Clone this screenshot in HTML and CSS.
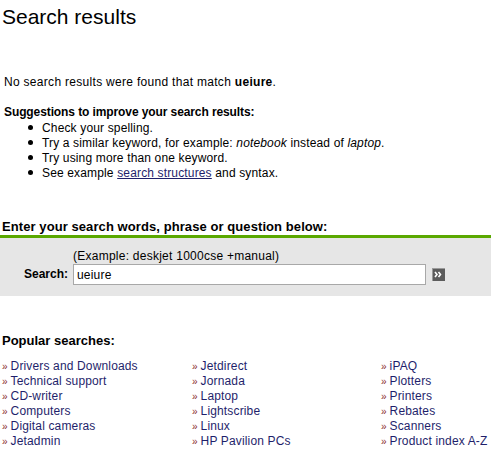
FILE: index.html
```html
<!DOCTYPE html>
<html>
<head>
<meta charset="utf-8">
<link rel="stylesheet" href="styles.css">
</head>
<body>
<h1 class="title">Search results</h1>
<p class="noresults">No search results were found that match <b>ueiure</b>.</p>
<p class="sugg-head">Suggestions to improve your search results:</p>
<ul class="sugg">
  <li>Check your spelling.</li>
  <li>Try a similar keyword, for example: <i>notebook</i> instead of <i>laptop</i>.</li>
  <li>Try using more than one keyword.</li>
  <li>See example <a href="#" class="inline-link">search structures</a> and syntax.</li>
</ul>
<h2 class="enter-head">Enter your search words, phrase or question below:</h2>
<div class="searchbox">
  <div class="sb-grid">
    <span></span>
    <span class="example">(Example: deskjet 1000cse +manual)</span>
    <label class="sb-label" for="q">Search:</label>
    <div class="sb-field">
      <input id="q" class="sb-input" type="text" value="ueiure">
      <button class="sb-btn" type="button" aria-label="Search">
        <svg width="13" height="13" viewBox="0 0 13 13">
          <rect x="0" y="0" width="13" height="13" fill="#5c5c5c"/>
          <path d="M0 0H13V1H1V13H0Z" fill="#9a9a9a"/>
          <path d="M3 4L5 6.5L3 9M6.5 4L8.5 6.5L6.5 9" stroke="#fff" stroke-width="1.6" fill="none"/>
        </svg>
      </button>
    </div>
  </div>
</div>
<h2 class="popular-head">Popular searches:</h2>
<div class="popular">
  <ul class="pcol">
    <li><a href="#">Drivers and Downloads</a></li>
    <li><a href="#">Technical support</a></li>
    <li><a href="#">CD-writer</a></li>
    <li><a href="#">Computers</a></li>
    <li><a href="#">Digital cameras</a></li>
    <li><a href="#">Jetadmin</a></li>
  </ul>
  <ul class="pcol">
    <li><a href="#">Jetdirect</a></li>
    <li><a href="#">Jornada</a></li>
    <li><a href="#">Laptop</a></li>
    <li><a href="#">Lightscribe</a></li>
    <li><a href="#">Linux</a></li>
    <li><a href="#">HP Pavilion PCs</a></li>
  </ul>
  <ul class="pcol">
    <li><a href="#">iPAQ</a></li>
    <li><a href="#">Plotters</a></li>
    <li><a href="#">Printers</a></li>
    <li><a href="#">Rebates</a></li>
    <li><a href="#">Scanners</a></li>
    <li><a href="#">Product index A-Z</a></li>
  </ul>
</div>
</body>
</html>
```
FILE: styles.css
```css
html, body {
  margin: 0;
  padding: 0;
  background: #fff;
}
body {
  font-family: "Liberation Sans", Arial, sans-serif;
  font-size: 12px;
  line-height: 15px;
  letter-spacing: 0.15px;
  color: #000;
}
b {
  letter-spacing: 0;
}
.title {
  margin: 5px 0 0 2px;
  font-size: 21px;
  line-height: 24px;
  font-weight: normal;
  letter-spacing: 0;
}
.noresults {
  margin: 46px 0 0 4px;
  letter-spacing: 0.3px;
}
.noresults b {
  letter-spacing: 0.3px;
}
.sugg-head {
  margin: 15px 0 0 4px;
  font-weight: bold;
  letter-spacing: -0.1px;
}
.sugg {
  margin: 1px 0 0 4px;
  padding-left: 38px;
  list-style: none;
}
.sugg li::before {
  content: "";
  display: inline-block;
  width: 5px;
  height: 5px;
  border-radius: 50%;
  background: #000;
  margin-left: -14px;
  margin-right: 9px;
  vertical-align: 2px;
}
.inline-link {
  color: #1f1f6b;
  text-decoration: underline;
}
.enter-head {
  margin: 38px 0 0 2px;
  font-size: 13px;
  line-height: 15px;
  font-weight: bold;
  letter-spacing: 0.08px;
}
.searchbox {
  margin-top: 1px;
  border-top: 3px solid #5aa800;
  background: #e6e6e6;
  padding: 11px 0 11px;
}
.sb-grid {
  display: grid;
  grid-template-columns: 73px auto;
  align-items: center;
}
.example {
  line-height: 15px;
  letter-spacing: 0.25px;
}
.sb-label {
  font-weight: bold;
  text-align: right;
  padding-right: 5px;
  letter-spacing: 0;
}
.sb-field {
  display: flex;
  align-items: center;
}
.sb-input {
  box-sizing: border-box;
  width: 353px;
  height: 21px;
  margin: 0;
  border: 1px solid #a8a8a8;
  padding: 0 2px 0 3px;
  font-family: "Liberation Sans", Arial, sans-serif;
  font-size: 12px;
  letter-spacing: 0.2px;
  color: #000;
  background: #fff;
}
.sb-btn {
  margin: 0 0 0 6px;
  padding: 0;
  border: 0;
  background: none;
  width: 13px;
  height: 13px;
  display: block;
}
.sb-btn svg {
  display: block;
}
.popular-head {
  margin: 37px 0 0 2px;
  font-size: 13px;
  line-height: 15px;
  font-weight: bold;
  letter-spacing: 0;
}
.popular {
  margin: 11px 0 0 2px;
  display: grid;
  grid-template-columns: 190px 189px auto;
}
.pcol {
  margin: 0;
  padding: 0;
  list-style: none;
}
.pcol li::before {
  content: "\00BB";
  color: #8b2b2b;
  font-size: 10px;
  margin-right: 3px;
  letter-spacing: 0;
}
.pcol a {
  color: #1f1f6b;
  text-decoration: none;
}
```
